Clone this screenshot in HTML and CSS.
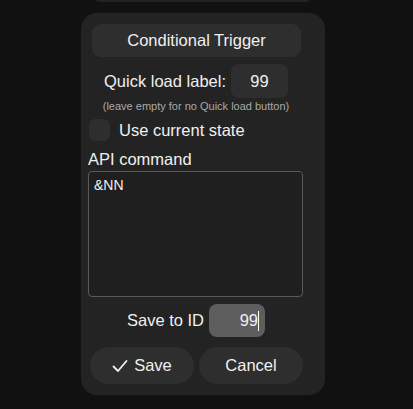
FILE: index.html
```html
<!DOCTYPE html>
<html>
<head>
<meta charset="utf-8">
<link rel="stylesheet" href="styles.css">
</head>
<body>
<div class="prev-card"></div>
<div class="card">
  <div class="title">Conditional Trigger</div>
  <div class="quick-row">
    <span class="label">Quick load label:</span>
    <div class="field quick-field">99</div>
  </div>
  <div class="hint">(leave empty for no Quick load button)</div>
  <div class="check-row">
    <span class="checkbox"></span>
    <span class="label">Use current state</span>
  </div>
  <div class="api-label">API command</div>
  <div class="textarea">&amp;NN</div>
  <div class="save-row">
    <span class="label">Save to ID</span>
    <div class="field id-field">99<span class="caret"></span></div>
  </div>
  <div class="buttons">
    <div class="btn">
      <svg class="check" width="16" height="14" viewBox="0 0 16 14"><path d="M1.5 7.5 L6 12 L14.5 2" fill="none" stroke="#f0f0f0" stroke-width="1.8" stroke-linecap="round" stroke-linejoin="round"/></svg>
      <span>Save</span>
    </div>
    <div class="btn">Cancel</div>
  </div>
</div>
</body>
</html>
```
FILE: styles.css
```css
html, body {
  margin: 0;
  padding: 0;
  background: #111111;
}
body {
  font-family: "Liberation Sans", Arial, sans-serif;
  color: #f0f0f0;
  font-size: 16.5px;
}
.prev-card {
  width: 225px;
  height: 22px;
  margin-top: -20px;
  margin-left: 90px;
  background: #232323;
  border-radius: 14px;
}
.card {
  box-sizing: border-box;
  width: 244px;
  margin-top: 11px;
  margin-left: 81px;
  padding: 11px 22px 11px 7px;
  background: #232323;
  border-radius: 16px;
}
.title {
  height: 33px;
  margin: 0 2px 0 4px;
  background: #2e2e2e;
  border-radius: 9px;
  display: flex;
  align-items: center;
  justify-content: center;
}
.quick-row {
  margin-top: 7px;
  display: flex;
  align-items: center;
  justify-content: center;
  gap: 5px;
  padding-left: 1px;
}
.field {
  box-sizing: border-box;
  border-radius: 8px;
  display: flex;
  align-items: center;
}
.quick-field {
  width: 57px;
  height: 34px;
  background: #2e2e2e;
  justify-content: center;
}
.hint {
  margin-top: 2px;
  font-size: 11px;
  line-height: 13px;
  color: #a9a9a9;
  text-align: center;
  padding-left: 1px;
}
.check-row {
  margin-top: 6px;
  display: flex;
  align-items: center;
  gap: 9px;
  margin-left: 1px;
}
.checkbox {
  width: 21px;
  height: 22px;
  border-radius: 6px;
  background: #2e2e2e;
}
.api-label {
  margin-top: 9px;
  line-height: 18px;
}
.textarea {
  box-sizing: border-box;
  margin-top: 3px;
  height: 126px;
  border: 1px solid #5a5a5a;
  border-radius: 4px;
  background: #1f1f1f;
  padding: 6px 5px;
  font-size: 14px;
  line-height: 15px;
}
.save-row {
  margin-top: 7px;
  display: flex;
  align-items: center;
  justify-content: center;
  gap: 5px;
  padding-left: 1px;
}
.id-field {
  width: 56px;
  height: 33px;
  background: #5e5e5e;
  justify-content: flex-end;
  padding-right: 6px;
}
.caret {
  display: inline-block;
  width: 1px;
  height: 20px;
  background: #ffffff;
}
.buttons {
  margin-top: 10px;
  margin-left: 2px;
  display: flex;
  gap: 5px;
}
.btn {
  flex: 1;
  height: 37px;
  border-radius: 19px;
  background: #2e2e2e;
  display: flex;
  align-items: center;
  justify-content: center;
  gap: 6px;
}
.check {
  display: block;
}
```
